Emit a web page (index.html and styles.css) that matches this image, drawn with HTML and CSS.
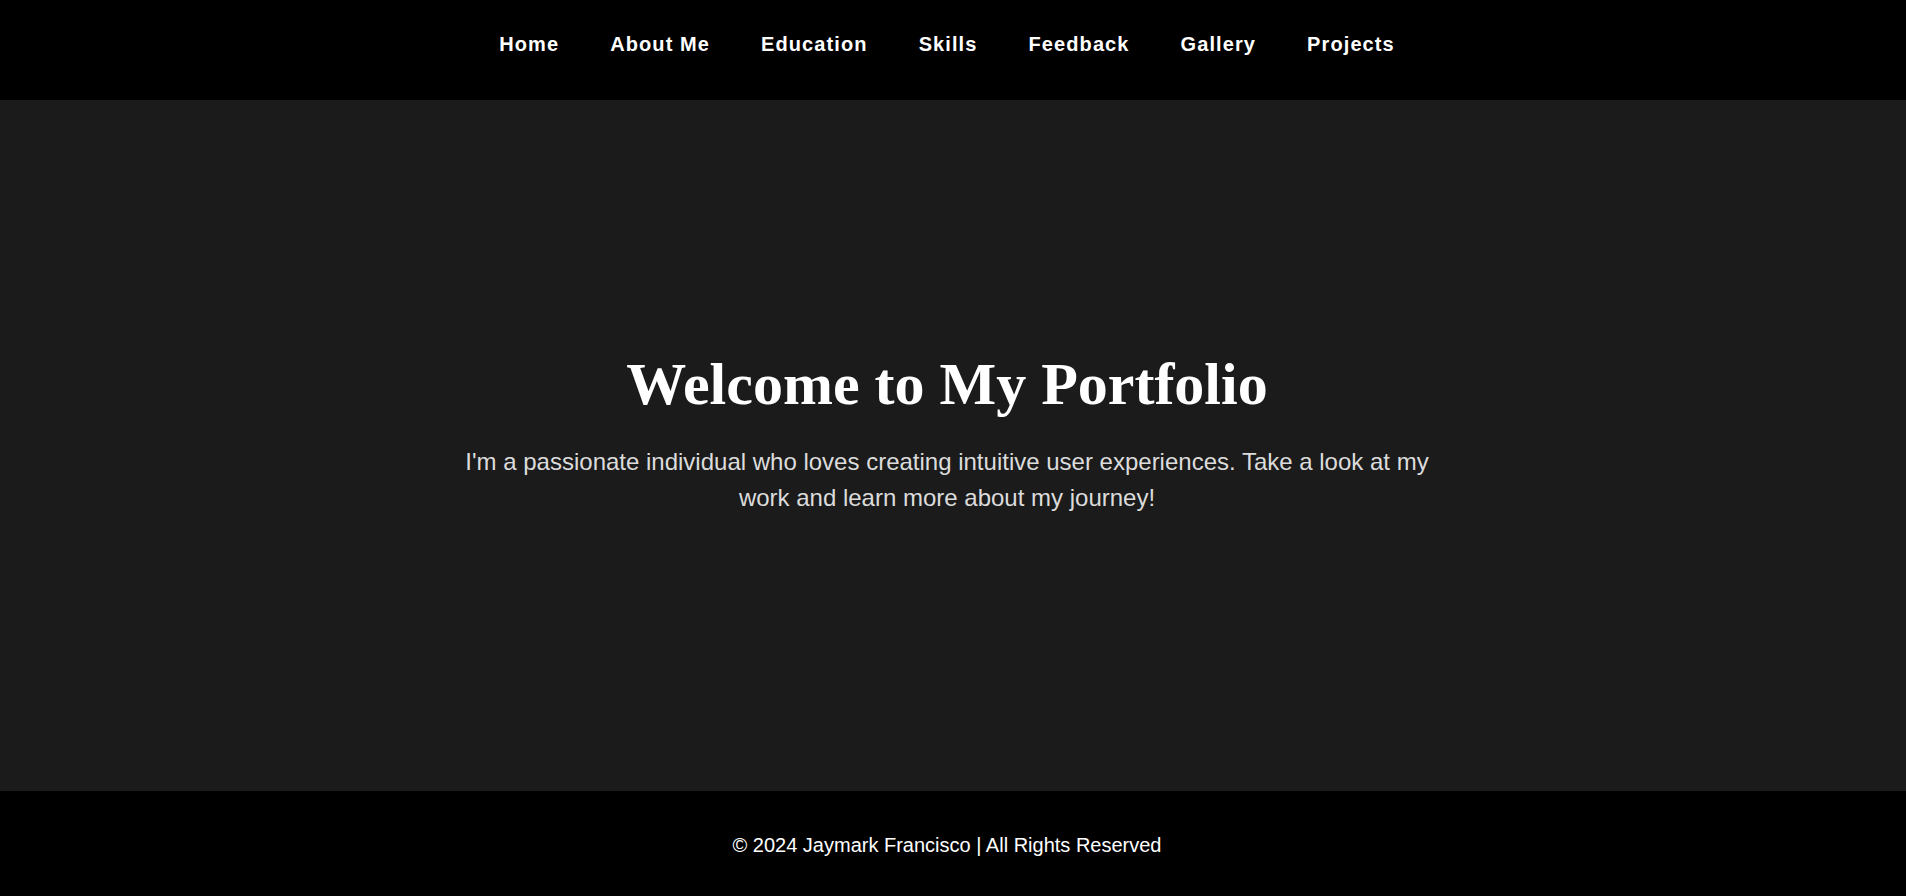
FILE: index.html
```html
<!DOCTYPE html>
<html lang="en">
<head>
<meta charset="utf-8">
<title>Jaymark Francisco | Portfolio</title>
<link rel="stylesheet" href="styles.css">
</head>
<body>
<nav class="topnav">
  <ul class="menu">
    <li><a href="#home">Home</a></li>
    <li><a href="#about">About Me</a></li>
    <li><a href="#education">Education</a></li>
    <li><a href="#skills">Skills</a></li>
    <li><a href="#feedback">Feedback</a></li>
    <li><a href="#gallery">Gallery</a></li>
    <li><a href="#projects">Projects</a></li>
  </ul>
</nav>
<main class="hero" id="home">
  <h1 class="hero-title">Welcome to My Portfolio</h1>
  <p class="hero-text">I'm a passionate individual who loves creating intuitive user experiences. Take a look at my work and learn more about my journey!</p>
</main>
<footer class="site-footer">
  <p class="copy">&copy; 2024 Jaymark Francisco | All Rights Reserved</p>
</footer>
</body>
</html>
```
FILE: styles.css
```css
* {
  box-sizing: border-box;
}

html, body {
  margin: 0;
  padding: 0;
  height: 100%;
}

body {
  display: flex;
  flex-direction: column;
  min-height: 100vh;
  background: #1b1b1b;
  color: #fff;
  font-family: "Liberation Sans", Arial, sans-serif;
}

.topnav {
  height: 100px;
  background: #000;
  padding-top: 33px;
  flex-shrink: 0;
}

.menu {
  list-style: none;
  margin: 0;
  padding: 0 12px 0 0;
  display: flex;
  justify-content: center;
  gap: 51px;
}

.menu a {
  display: block;
  color: #fff;
  text-decoration: none;
  font-weight: bold;
  font-size: 20px;
  line-height: 23px;
  letter-spacing: 1.1px;
}

.hero {
  flex: 1;
  display: flex;
  flex-direction: column;
  align-items: center;
  justify-content: center;
  text-align: center;
  padding: 0 32px 2px 20px;
}

.hero-title {
  margin: 0 0 25px;
  font-family: "Liberation Serif", "Times New Roman", serif;
  font-weight: bold;
  font-size: 60px;
  color: #fff;
}

.hero-text {
  margin: 0 0 24px;
  max-width: 1000px;
  font-size: 24px;
  line-height: 36px;
  color: #dcdcdc;
}

.site-footer {
  height: 105px;
  background: #000;
  display: flex;
  align-items: center;
  justify-content: center;
  padding-right: 12px;
  flex-shrink: 0;
}

.copy {
  margin: 4px 0 0;
  font-size: 20px;
  line-height: 23px;
  color: #fff;
}
```
